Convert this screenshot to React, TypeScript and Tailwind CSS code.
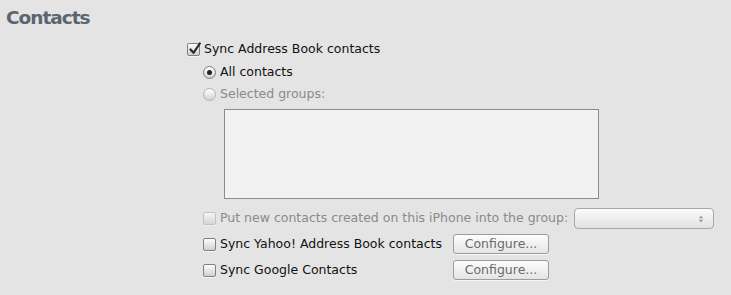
import React from "react";

const font = { fontFamily: '"DejaVu Sans", "Lucida Grande", sans-serif' };

function Checkbox({ checked = false, disabled = false }: { checked?: boolean; disabled?: boolean }) {
  return (
    <span
      className={`relative inline-block w-[13px] h-[13px] rounded-[2px] border shrink-0 bg-gradient-to-b from-[#fdfdfd] to-[#cfcfcf] ${
        disabled ? "border-[#b4b4b4] opacity-70" : "border-[#808080]"
      } shadow-[0_1px_0_rgba(255,255,255,0.6)]`}
    >
      {checked && (
        <svg viewBox="0 0 14 14" className="absolute left-[0px] top-[-2px] w-[14px] h-[14px]">
          <path d="M2.5 7.5 L5.5 10.8 L11.8 1.5" fill="none" stroke="#2b2b2b" strokeWidth="2.2" strokeLinecap="round" strokeLinejoin="round" />
        </svg>
      )}
    </span>
  );
}

function Radio({ checked = false, disabled = false }: { checked?: boolean; disabled?: boolean }) {
  return (
    <span
      className={`relative inline-flex items-center justify-center w-[13px] h-[13px] rounded-full border shrink-0 bg-gradient-to-b from-[#ffffff] to-[#d2d2d2] ${
        disabled ? "border-[#b0b0b0]" : "border-[#7a7a7a]"
      }`}
    >
      {checked && <span className="w-[5px] h-[5px] rounded-full bg-[#222]" />}
    </span>
  );
}

function Button({ children }: { children: React.ReactNode }) {
  return (
    <span className="inline-flex items-center justify-center w-[96px] h-[20px] rounded-[3px] border border-[#9c9c9c] bg-gradient-to-b from-[#fdfdfd] to-[#e4e4e4] text-[12.5px] text-[#6a6a6a] shadow-[0_1px_0_rgba(255,255,255,0.7)]">
      {children}
    </span>
  );
}

export default function App() {
  return (
    <div className="w-[731px] h-[295px] bg-[#e4e4e4] overflow-hidden" style={font}>
      <div className="pl-[6px] pt-[6px] h-[41px]">
        <div className="text-[18.5px] font-bold text-[#5b6570] leading-[24px] tracking-[-1px]">Contacts</div>
      </div>
      <div className="pl-[187px] flex flex-col">
        <div className="h-[16px] flex items-center gap-[4px] text-[12.5px] text-[#111]">
          <Checkbox checked />
          <span>Sync Address Book contacts</span>
        </div>
        <div className="mt-[7px] pl-[16px] h-[16px] flex items-center gap-[4px] text-[12.5px] text-[#111]">
          <Radio checked />
          <span>All contacts</span>
        </div>
        <div className="mt-[6px] pl-[16px] h-[16px] flex items-center gap-[4px] text-[12.5px] text-[#8a8a8a]">
          <Radio disabled />
          <span>Selected groups:</span>
        </div>
        <div className="mt-[7px] ml-[37px] w-[375px] h-[90px] border border-[#8c8c8c] bg-[#f2f2f2]" />
        <div className="mt-[9px] pl-[16px] h-[21px] flex items-center text-[12.5px] text-[#8a8a8a]">
          <Checkbox disabled />
          <span className="ml-[4px]">Put new contacts created on this iPhone into the group:</span>
          <span className="ml-auto mr-[17px] relative w-[140px] h-[21px] rounded-[4px] border border-[#a8a8a8] bg-gradient-to-b from-[#fafafa] to-[#e2e2e2]">
            <svg viewBox="0 0 8 12" className="absolute right-[9px] top-[5px] w-[6px] h-[10px]">
              <path d="M1 5 L4 1.5 L7 5 Z" fill="#9a9a9a" />
              <path d="M1 7 L4 10.5 L7 7 Z" fill="#9a9a9a" />
            </svg>
          </span>
        </div>
        <div className="mt-[5px] pl-[16px] h-[20px] flex items-center text-[12.5px] text-[#111]">
          <Checkbox />
          <span className="ml-[4px] w-[233px]">Sync Yahoo! Address Book contacts</span>
          <Button>Configure...</Button>
        </div>
        <div className="mt-[6px] pl-[16px] h-[20px] flex items-center text-[12.5px] text-[#111]">
          <Checkbox />
          <span className="ml-[4px] w-[233px]">Sync Google Contacts</span>
          <Button>Configure...</Button>
        </div>
      </div>
    </div>
  );
}
